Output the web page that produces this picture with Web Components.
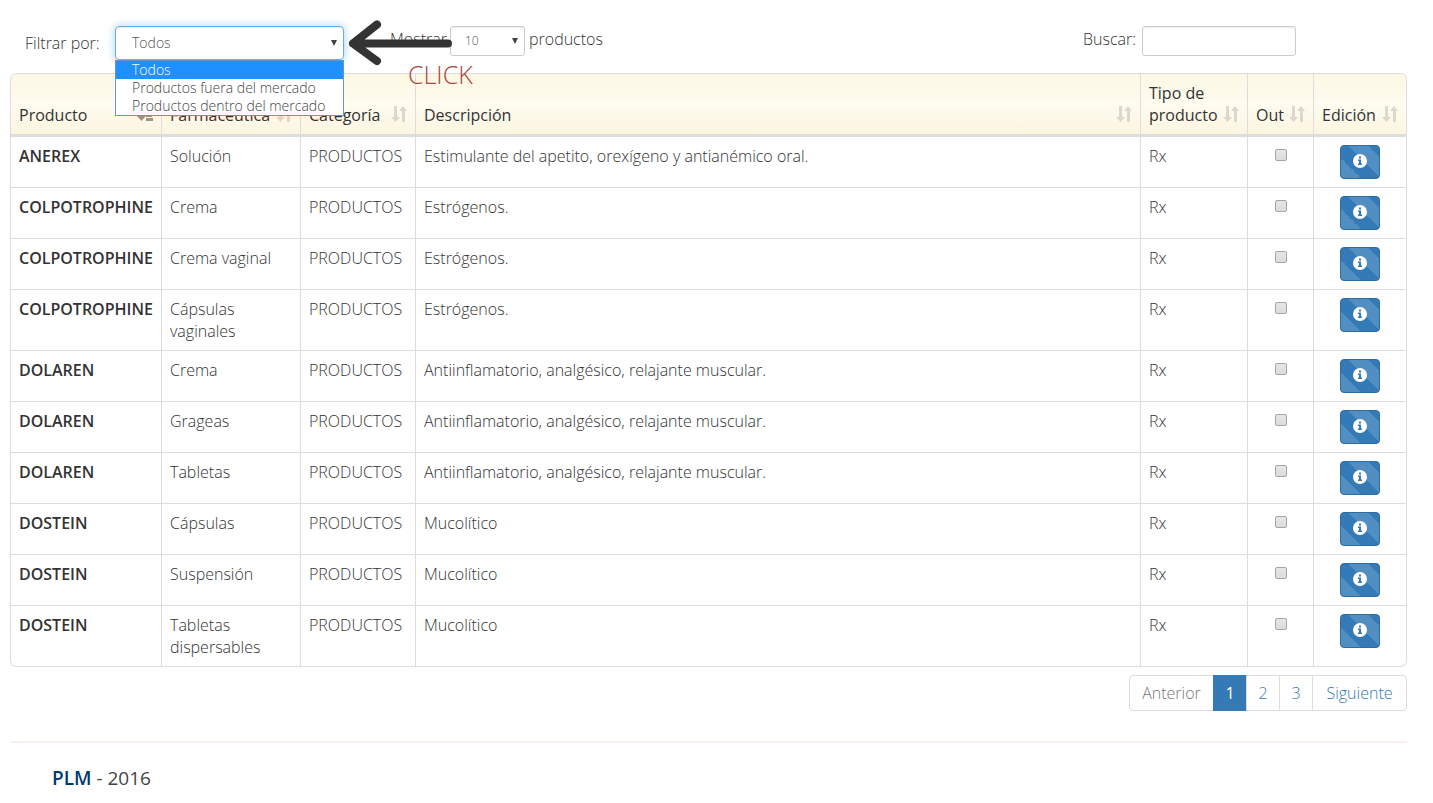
<!DOCTYPE html>
<html lang="es">
<head>
<meta charset="utf-8">
<title>PLM - Productos</title>
<style>
body { margin: 0; background: #fff; color: #333; font: 300 16px/22px "Open Sans", "Noto Sans", sans-serif; }
</style>
</head>
<body>
<plm-page></plm-page>
<script>
const define = (name, html) => {
  const template = document.createElement('template');
  template.innerHTML = html;
  customElements.define(name, class extends HTMLElement {
    constructor() {
      super();
      this.attachShadow({ mode: 'open' }).append(template.content.cloneNode(true));
    }
  });
};

define('sort-icon', `
<style>
  :host { display: block; flex: none; width: 16px; height: 16px; margin-bottom: 4px; color: #333; opacity: .16; }
  :host([active]) { opacity: .5; }
  svg { display: block; }
  .asc, :host([active]) .both { display: none; }
  :host([active]) .asc { display: block; }
</style>
<svg width="16" height="16" viewBox="0 0 16 16" fill="currentColor" aria-hidden="true">
  <path class="both" d="M3 0h3v11h3l-4.500 5L0 11h3zM11 16V5H8l4-5 4 5h-2v11z"/>
  <path class="asc" d="M3 0h3v10h3l-4.500 5L0 10h3zM10 1h3v3h-3zM9 5h5v3H9zM9 9h6v2H9zM9 12h7v3H9z"/>
</svg>`);

define('info-button', `
<style>
  :host { display: block; }
  button { display: block; box-sizing: border-box; width: 40px; height: 34px; margin: 0 auto; padding: 0 0 2px;
    border: 1px solid #2e6da4; border-radius: 4px; color: #fff; cursor: pointer;
    background: #337ab7 linear-gradient(45deg, rgba(255,255,255,.15) 25%, transparent 25% 50%, rgba(255,255,255,.15) 50% 75%, transparent 75%) 0 -8px / 40px 40px; }
  svg { display: block; margin: 0 auto; }
</style>
<button type="button" aria-label="Información">
  <svg width="14" height="14" viewBox="0 0 14 14" aria-hidden="true">
    <circle cx="7" cy="7" r="7" fill="#fff"/>
    <path fill="#337ab7" d="M6 2.500h2v2H6zM5 5.500h3v4h1v1.500H5V9.500h1V7H5z"/>
  </svg>
</button>`);

define('click-arrow', `
<style>
  :host { display: block; }
  svg { display: block; }
  span { display: block; margin: -5px 0 0 60px; color: #a94442; font-size: 25px; line-height: 27px; }
</style>
<svg width="106" height="46" viewBox="0 0 106 46" fill="none" stroke="#333" stroke-width="8" stroke-linecap="round" stroke-linejoin="round" aria-hidden="true">
  <path d="M29 4.500L5 23.500 29 41M5 23.500H100"/><path d="M4 23.500L12 17v13z" fill="#333" stroke-width="4"/>
</svg>
<span><slot></slot></span>`);

define('filter-select', `
<style>
  :host { display: flex; align-items: center; gap: 15px; }
  label { white-space: nowrap; width: 75px; }
  .box { position: relative; width: 229px; }
  select { display: block; box-sizing: border-box; width: 100%; height: 34px; margin: 0; padding: 0 16px; appearance: none;
    border: 1px solid #66afe9; border-radius: 4px; color: #555; font: inherit; font-size: 14px; outline: 0;
    background: #fff; box-shadow: inset 0 1px 1px rgba(0,0,0,.08), 0 0 8px rgba(102,175,233,.6); }
  .caret { position: absolute; right: 6px; top: 13px; pointer-events: none; }
  ul { position: absolute; z-index: 2; top: 34px; left: 0; right: 0; margin: 0; padding: 0; list-style: none;
    border: 1px solid #6a93cb; background: #fff; color: #444; font-size: 14px; line-height: 18px; }
  li { padding-left: 16px; white-space: nowrap; }
  li[aria-selected=true] { background: #1e90ff; color: #fff; }
</style>
<label for="filter">Filtrar por:</label>
<div class="box">
  <select id="filter"><option>Todos</option></select>
  <svg class="caret" width="8" height="8" viewBox="0 0 8 8" aria-hidden="true"><path d="M1 1h6L4 7z" fill="#444"/></svg>
  <ul role="listbox" aria-label="Filtrar por">
    <li role="option" aria-selected="true">Todos</li>
    <li role="option">Productos fuera del mercado</li>
    <li role="option">Productos dentro del mercado</li>
  </ul>
</div>`);

define('page-length', `
<style>
  :host { display: flex; align-items: flex-start; gap: 4px; line-height: 26px; }
  .lead { width: 56px; }
  .box { position: relative; width: 75px; }
  select { display: block; box-sizing: border-box; width: 100%; height: 30px; margin: 0; padding: 0 14px; appearance: none;
    border: 1px solid #ccc; border-radius: 3px; background: #fff; color: #555; font: inherit; font-size: 12px; box-shadow: inset 0 1px 1px rgba(0,0,0,.08); }
  svg { position: absolute; right: 6px; top: 11px; pointer-events: none; }
</style>
<label class="lead" for="len">Mostrar</label>
<div class="box">
  <select id="len"><option>10</option></select>
  <svg width="8" height="8" viewBox="0 0 8 8" aria-hidden="true"><path d="M1 1h6L4 7z" fill="#444"/></svg>
</div>
<label for="len">productos</label>`);

define('search-box', `
<style>
  :host { display: flex; align-items: flex-start; gap: 6px; line-height: 26px; }
  input { box-sizing: border-box; width: 154px; height: 30px; margin: 0; padding: 4px 10px; border: 1px solid #ccc; border-radius: 3px;
    background: #fff; font: inherit; font-size: 12px; box-shadow: inset 0 1px 1px rgba(0,0,0,.08); }
</style>
<label for="q">Buscar:</label><input id="q" type="search">`);

define('product-toolbar', `
<style>
  :host { display: flex; align-items: flex-start; position: relative; padding: 26px 111px 13px 15px; }
  page-length { margin-left: 46px; }
  search-box { margin-left: auto; }
  click-arrow { position: absolute; z-index: 3; left: 338px; top: 20px; pointer-events: none; }
</style>
<filter-select></filter-select>
<page-length></page-length>
<search-box></search-box>
<click-arrow>CLICK</click-arrow>`);

const rows = [
  ['ANEREX', 'Solución', 'Estimulante del apetito, orexígeno y antianémico oral.'],
  ['COLPOTROPHINE', 'Crema', 'Estrógenos.'],
  ['COLPOTROPHINE', 'Crema vaginal', 'Estrógenos.'],
  ['COLPOTROPHINE', 'Cápsulas vaginales', 'Estrógenos.'],
  ['DOLAREN', 'Crema', 'Antiinflamatorio, analgésico, relajante muscular.'],
  ['DOLAREN', 'Grageas', 'Antiinflamatorio, analgésico, relajante muscular.'],
  ['DOLAREN', 'Tabletas', 'Antiinflamatorio, analgésico, relajante muscular.'],
  ['DOSTEIN', 'Cápsulas', 'Mucolítico'],
  ['DOSTEIN', 'Suspensión', 'Mucolítico'],
  ['DOSTEIN', 'Tabletas dispersables', 'Mucolítico']
];
const heads = ['Producto', 'Farmacéutica', 'Categoría', 'Descripción', 'Tipo de producto', 'Out', 'Edición'];

define('product-table', `
<style>
  :host { display: block; }
  table { width: 100%; table-layout: fixed; border-collapse: separate; border-spacing: 0; border: 1px solid #ddd; border-left: 0; border-radius: 6px; overflow: hidden; }
  th, td { padding: 8px; text-align: left; vertical-align: top; font-weight: inherit; border-left: 1px solid #ddd; }
  th { vertical-align: bottom; font-weight: 400; border-bottom: 3px solid #ddd; background: linear-gradient(#fcf8e3, #fefbf0 50%, #fcf6e0); }
  th div { display: flex; align-items: flex-end; justify-content: space-between; }
  tr + tr td { border-top: 1px solid #ddd; }
  tr:first-child th:first-child { border-top-left-radius: 6px; }
  tr:last-child td:first-child { border-bottom-left-radius: 6px; }
  td:first-child { font-weight: 600; }
  .p { width: 151px; } .f { width: 139px; } .c { width: 115px; } .t { width: 107px; } .o { width: 66px; } .e { width: 93px; }
  input { display: block; box-sizing: border-box; width: 12px; height: 12px; margin: 4px auto 0; appearance: none;
    border: 1px solid #a6a6a6; border-radius: 2px; background: linear-gradient(#e6e6e6, #dcdcdc); }
</style>
<table>
  <colgroup><col class="p"><col class="f"><col class="c"><col><col class="t"><col class="o"><col class="e"></colgroup>
  <thead><tr>${heads.map((h, i) => `<th scope="col"><div>${h}<sort-icon${i ? '' : ' active'}></sort-icon></div></th>`).join('')}</tr></thead>
  <tbody>${rows.map(r => `<tr><td>${r[0]}</td><td>${r[1]}</td><td>PRODUCTOS</td><td>${r[2]}</td><td>Rx</td><td><input type="checkbox" aria-label="Out ${r[0]} ${r[1]}"></td><td><info-button></info-button></td></tr>`).join('')}</tbody>
</table>`);

define('product-pager', `
<style>
  :host { display: flex; justify-content: flex-end; margin-top: 8px; }
  nav { display: flex; }
  a { box-sizing: border-box; width: 34px; height: 36px; padding: 6px 0; border: 1px solid #ddd; margin-left: -1px; color: #337ab7; line-height: 22px; text-align: center; text-decoration: none; }
  a:first-child { width: 85px; border-radius: 4px 0 0 4px; color: #777; }
  a:last-child { width: 95px; border-radius: 0 4px 4px 0; }
  a[aria-current] { background: #337ab7; border-color: #337ab7; color: #fff; font-weight: 400; }
</style>
<nav aria-label="Páginas"><a href="#anterior">Anterior</a><a href="#1" aria-current="page">1</a><a href="#2">2</a><a href="#3">3</a><a href="#siguiente">Siguiente</a></nav>`);

define('page-footer', `
<style>
  :host { display: block; margin-top: 30px; padding: 22px 42px 12px; border-top: 2px solid #fdeeee; font-size: 19px; line-height: 26px; font-weight: 400; color: #444; }
  b { font-weight: 600; color: #003a75; }
</style>
<b>PLM</b> - 2016`);

define('plm-page', `
<style>:host { display: block; padding: 0 26px 0 10px; }</style>
<product-toolbar></product-toolbar>
<product-table></product-table>
<product-pager></product-pager>
<page-footer></page-footer>`);
</script>
</body>
</html>
